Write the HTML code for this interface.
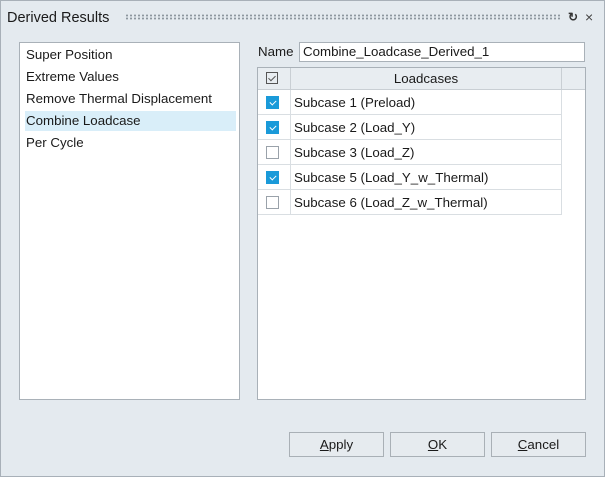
<!DOCTYPE html>
<html><head><style>
*{box-sizing:border-box;margin:0;padding:0}
body{width:605px;height:477px;background:#e4eaef;font-family:"Liberation Sans",sans-serif;font-size:13.3px;color:#1a1a1a;position:relative;overflow:hidden;box-shadow:inset 0 0 0 1px #a8b0b8}
.a{position:absolute}
.box{background:#fff;border:1px solid #a9b1b8}
.item{position:absolute;left:5px;width:211px;height:20px;line-height:20px;padding-left:1px}
.row{position:absolute;left:0;height:25px;width:304px;border-bottom:1px solid #d9dee2}
.cb{position:absolute;left:8px;top:6px;width:13px;height:13px;border:1px solid #9aa2aa;background:#fff}
.cb.on{background:#1a9ad9;border-color:#1a9ad9}
.cb.on:after{content:"";position:absolute;left:4px;top:2px;width:3px;height:5px;border:solid #fff;border-width:0 1.5px 1.5px 0;transform:rotate(45deg)}
.txt{position:absolute;left:36px;top:0;line-height:25px}
.vl{position:absolute;left:32px;top:0;width:1px;height:25px;background:#d9dee2}
.btn{position:absolute;top:432px;width:95px;height:25px;border:1px solid #a9b0b6;background:#e6ebef;text-align:center;line-height:23px;font-size:13.3px}
</style></head><body>
<div class="a" style="left:7px;top:10px;font-size:14.5px">Derived Results</div>
<div class="a" style="left:125px;top:14px;width:437px;height:6px;background-image:radial-gradient(circle,#8e979f 0.9px,transparent 1.2px);background-size:4px 3px"></div>
<div class="a" style="left:568px;top:10px;font-size:12px;font-weight:bold;color:#333">↻</div>
<div class="a" style="left:585px;top:9px;font-size:14px;color:#444">×</div>
<div class="a box" style="left:19px;top:42px;width:221px;height:358px">
<div class="item" style="top:2px">Super Position</div>
<div class="item" style="top:24px">Extreme Values</div>
<div class="item" style="top:46px">Remove Thermal Displacement</div>
<div class="item" style="top:68px;background:#d9eef9">Combine Loadcase</div>
<div class="item" style="top:90px">Per Cycle</div>
</div>
<div class="a" style="left:258px;top:44px">Name</div>
<div class="a box" style="left:299px;top:42px;width:286px;height:20px;padding-left:3px;line-height:18px">Combine_Loadcase_Derived_1</div>
<div class="a box" style="left:257px;top:67px;width:329px;height:333px">
<div class="a" style="left:0;top:0;width:327px;height:22px;background:#e8edf1;border-bottom:1px solid #c9cfd4"></div>
<div class="a" style="left:32px;top:0;width:1px;height:22px;background:#c9cfd4"></div>
<div class="a" style="left:303px;top:0;width:1px;height:22px;background:#c9cfd4"></div>
<div class="a" style="left:8px;top:4px;width:12px;height:12px;border:1px solid #555"></div>
<div class="a" style="left:12px;top:6px;width:4px;height:7px;border:solid #555;border-width:0 1.5px 1.5px 0;transform:rotate(45deg)"></div>
<div class="a" style="left:33px;top:0;width:270px;text-align:center;line-height:22px">Loadcases</div>
<div class="a" style="left:303px;top:22px;width:1px;height:125px;background:#d9dee2"></div>
<div class="row" style="top:22px"><div class="cb on"></div><div class="vl"></div><div class="txt">Subcase 1 (Preload)</div></div>
<div class="row" style="top:47px"><div class="cb on"></div><div class="vl"></div><div class="txt">Subcase 2 (Load_Y)</div></div>
<div class="row" style="top:72px"><div class="cb"></div><div class="vl"></div><div class="txt">Subcase 3 (Load_Z)</div></div>
<div class="row" style="top:97px"><div class="cb on"></div><div class="vl"></div><div class="txt">Subcase 5 (Load_Y_w_Thermal)</div></div>
<div class="row" style="top:122px"><div class="cb"></div><div class="vl"></div><div class="txt">Subcase 6 (Load_Z_w_Thermal)</div></div>
</div>
<div class="btn" style="left:289px"><u>A</u>pply</div>
<div class="btn" style="left:390px"><u>O</u>K</div>
<div class="btn" style="left:491px"><u>C</u>ancel</div>
</body></html>
